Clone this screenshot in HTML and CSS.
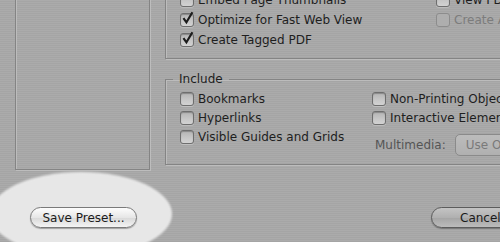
FILE: index.html
```html
<!DOCTYPE html>
<html lang="en">
<head>
    <meta charset="UTF-8">
    <title>Save Adobe PDF - Options</title>
    <link rel="stylesheet" href="styles.css">
</head>
<body>
    <div class="dialog">
        <div class="spot"></div>

        <div class="content">
            <div class="preview"></div>

            <div class="options">
                <div class="group general">
                    <div class="col first">
                        <label class="check"><span class="box"></span>Embed Page Thumbnails</label>
                        <label class="check"><span class="box on"><svg viewBox="0 0 14 14"><path d="M3.2 6.6 L6 10.6 L11.6 1.2"/></svg></span>Optimize for Fast Web View</label>
                        <label class="check"><span class="box on"><svg viewBox="0 0 14 14"><path d="M3.2 6.6 L6 10.6 L11.6 1.2"/></svg></span>Create Tagged PDF</label>
                    </div>
                    <div class="col">
                        <label class="check"><span class="box"></span>View PDF after Saving</label>
                        <label class="check disabled"><span class="box"></span>Create Acrobat Layers from Top-Level Layers</label>
                    </div>
                </div>

                <fieldset class="group include">
                    <legend>Include</legend>
                    <div class="col first">
                        <label class="check row"><span class="box"></span>Bookmarks</label>
                        <label class="check row"><span class="box"></span>Hyperlinks</label>
                        <label class="check row"><span class="box"></span>Visible Guides and Grids</label>
                    </div>
                    <div class="col">
                        <label class="check row"><span class="box"></span>Non-Printing Objects</label>
                        <label class="check row"><span class="box"></span>Interactive Elements</label>
                        <div class="media">
                            <span class="media-label">Multimedia:</span>
                            <span class="select">Use Object Settings</span>
                        </div>
                    </div>
                </fieldset>
            </div>
        </div>

        <div class="footer">
            <button class="btn save">Save Preset...</button>
            <button class="btn cancel">Cancel</button>
        </div>
    </div>
</body>
</html>
```

FILE: styles.css
```css
body {
    margin: 0;
    overflow: hidden;
    background: repeating-linear-gradient(#ababab 0 1px, #a5a5a5 1px 2px);
    font-family: "DejaVu Sans", sans-serif;
    font-size: 12px;
    color: #1e1e1e;
}
.dialog {
    position: relative;
    width: 760px;
    margin-top: -20px;
    padding: 0 0 40px 15px;
}
.content {
    display: flex;
    position: relative;
    z-index: 1;
}
.preview {
    width: 133px;
    height: 188px;
    border: 1px solid #848484;
    box-shadow: inset 1px 1px 0 #bcbcbc, 1px 1px 0 #bdbdbd;
}
.options {
    margin-left: 15px;
    flex: 1;
}
.group {
    display: flex;
    border: 1px solid #848484;
    box-shadow: inset 1px 1px 0 #bcbcbc, 1px 1px 0 #bdbdbd;
}
.general {
    padding: 9px 0 8px 14px;
}
.general .first {
    width: 256px;
}
.col {
    display: flex;
    flex-direction: column;
}
.check {
    display: flex;
    align-items: center;
    height: 20px;
    white-space: nowrap;
}
.check.row {
    height: 19px;
}
.box {
    box-sizing: border-box;
    width: 14px;
    height: 14px;
    margin-right: 4px;
    border: 1px solid #6e6e6e;
    border-radius: 3px;
    background: linear-gradient(#b4b4b4, #c8c8c8 60%, #d2d2d2);
    box-shadow: inset 0 1px 1px rgba(0, 0, 0, 0.25), 0 1px 0 rgba(255, 255, 255, 0.25);
    position: relative;
}
.box svg {
    position: absolute;
    left: -1px;
    top: -3px;
    width: 15px;
    height: 15px;
    fill: none;
    stroke: #1c1c1c;
    stroke-width: 2;
}
.disabled {
    color: #7c7c7c;
}
.disabled .box {
    border-color: #8c8c8c;
    background: #aeaeae;
    box-shadow: none;
}
.include {
    margin: 12px 0 0;
    padding: 2px 0 8px 14px;
}
.include legend {
    margin-left: -7px;
    padding: 0 6px;
    line-height: 16px;
}
.include .first {
    width: 192px;
}
.media {
    display: flex;
    align-items: center;
    margin-top: 7px;
    height: 22px;
    white-space: nowrap;
}
.media-label {
    margin-left: 3px;
    color: #555;
}
.select {
    margin-left: 9px;
    padding: 0 10px;
    height: 20px;
    line-height: 20px;
    border: 1px solid #8a8a8a;
    border-radius: 5px;
    background: linear-gradient(#bcbcbc, #b0b0b0);
    color: #7a7a7a;
}
.footer {
    display: flex;
    gap: 294px;
    padding: 37px 0 0 15px;
    position: relative;
    z-index: 1;
}
.btn {
    height: 21px;
    padding: 0;
    border-radius: 11px;
    font-family: "DejaVu Sans", sans-serif;
    font-size: 12px;
    color: #1a1a1a;
    white-space: nowrap;
}
.save {
    width: 107px;
    border: 1px solid #7a7a7a;
    background: linear-gradient(#fdfdfd, #e6e6e6 50%, #d8d8d8 51%, #f4f4f4);
    box-shadow: 0 1px 1px rgba(0, 0, 0, 0.3);
}
.cancel {
    width: 110px;
    padding-left: 28px;
    text-align: left;
    border: 1px solid #5c5c5c;
    background: linear-gradient(#c4c4c4, #b0b0b0 50%, #a4a4a4 51%, #bcbcbc);
    box-shadow: 0 1px 1px rgba(0, 0, 0, 0.3);
}
.spot {
    position: absolute;
    left: -10px;
    top: 192px;
    width: 182px;
    height: 84px;
    border-radius: 50%;
    background: repeating-linear-gradient(#ebebeb 0 1px, #e4e4e4 1px 2px);
    filter: blur(1px);
}
```
